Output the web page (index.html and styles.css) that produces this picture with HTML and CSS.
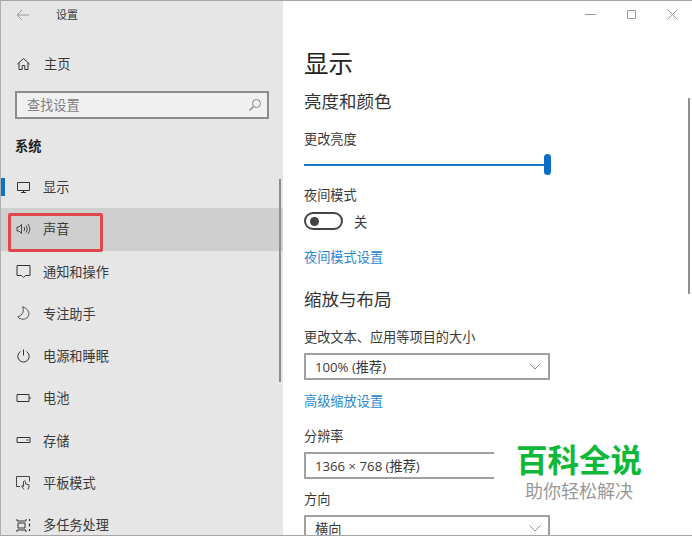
FILE: index.html
```html
<!DOCTYPE html>
<html lang="zh-CN">
<head>
<meta charset="utf-8">
<title>设置</title>
<link rel="stylesheet" href="styles.css">
</head>
<body>
<div class="window">
  <aside class="sidebar">
    <div class="titlebar">
      <svg class="back" width="14" height="12" viewBox="0 0 14 12"><path d="M6 1 1 6l5 5M1 6h12" fill="none" stroke="#9a9a9a" stroke-width="1"/></svg>
      <span class="app-title">设置</span>
    </div>
    <div class="home">
      <svg class="icon" width="14" height="14" viewBox="0 0 14 14"><path d="M1 7 7 1.500 13 7M2.500 6v6.500h3.200V8.500h2.600v4h3.200V6" fill="none" stroke="#333" stroke-width="1"/></svg>
      <span>主页</span>
    </div>
    <div class="search">
      <span class="search-text">查找设置</span>
      <svg width="14" height="14" viewBox="0 0 14 14"><circle cx="8.500" cy="5.500" r="4" fill="none" stroke="#8a8a8a"/><path d="M5.500 8.500 1.500 12.500" stroke="#8a8a8a" stroke-width="1.200"/></svg>
    </div>
    <div class="group">系统</div>
    <nav class="nav">
      <div class="item current">
        <svg class="icon" width="14" height="14" viewBox="0 0 14 14"><path d="M1 2.500h12v8H1zM7 10.500v2M4.500 12.500h5" fill="none" stroke="#333"/></svg>
        <span>显示</span>
      </div>
      <div class="item selected">
        <svg class="icon" width="15" height="14" viewBox="0 0 15 14"><path d="M1 5h2l2.500-2.500v9L3 9H1zM8 5c.8 1.200.8 2.800 0 4M10 3.500c1.500 2 1.500 5 0 7M12 2c2.300 3 2.300 7 0 10" fill="none" stroke="#333" stroke-width=".9"/></svg>
        <span>声音</span>
      </div>
      <div class="item">
        <svg class="icon" width="14" height="14" viewBox="0 0 14 14"><path d="M.5 1.500h13v10H9L7 13.500 5 11.500H.5z" fill="none" stroke="#333"/></svg>
        <span>通知和操作</span>
      </div>
      <div class="item">
        <svg class="icon" width="14" height="14" viewBox="0 0 14 14"><path d="M6 .800C8 5 6.500 9 1.200 10.800 3.800 14 9 14 11.500 10.800 14 7.200 11 2 6 .800z" fill="none" stroke="#444" stroke-width=".9"/></svg>
        <span>专注助手</span>
      </div>
      <div class="item">
        <svg class="icon" width="14" height="14" viewBox="0 0 14 14"><path d="M4 2.500a5.700 5.700 0 1 0 6 0M7 .5v6" fill="none" stroke="#333"/></svg>
        <span>电源和睡眠</span>
      </div>
      <div class="item">
        <svg class="icon" width="14" height="14" viewBox="0 0 14 14"><path d="M.5 3.500h12v7H.5z" fill="none" stroke="#333"/><path d="M13 6h1v2h-1z" fill="#333"/></svg>
        <span>电池</span>
      </div>
      <div class="item">
        <svg class="icon" width="14" height="14" viewBox="0 0 14 14"><path d="M.5 4.500h13v5H.5z" fill="none" stroke="#333"/><path d="M10 7h2" stroke="#333"/></svg>
        <span>存储</span>
      </div>
      <div class="item">
        <svg class="icon" width="15" height="15" viewBox="0 0 15 15"><path d="M4 11.500H.5v-10h13v5M8 14.500 5.500 11c.5-.6 1.200-.3 2 .5V6.500c.5-1 1.500-1 2 0V9l3.500.8v2.200l-1 2.500" fill="none" stroke="#333" stroke-width=".9"/></svg>
        <span>平板模式</span>
      </div>
      <div class="item">
        <svg class="icon" width="14" height="14" viewBox="0 0 14 14"><path d="M.5 1v2h9V1M.5 14v-2h9v2M1.500 5h7v5h-7z" fill="none" stroke="#333"/><path d="M13 1v2M13 5.500v3M13 11v2" stroke="#333" stroke-width="1.200"/></svg>
        <span>多任务处理</span>
      </div>
    </nav>
  </aside>
  <main class="content">
    <div class="controls">
      <svg width="11" height="11" viewBox="0 0 11 11"><path d="M0 5.500h11" stroke="#999"/></svg>
      <svg width="11" height="11" viewBox="0 0 11 11"><path d="M1.500 1.500h8v8h-8z" fill="none" stroke="#999"/></svg>
      <svg width="11" height="11" viewBox="0 0 11 11"><path d="m.5.500 10 10M10.500.500l-10 10" stroke="#999"/></svg>
    </div>
    <h1 class="title">显示</h1>
    <h2 class="section first">亮度和颜色</h2>
    <div class="label brightness">更改亮度</div>
    <div class="slider"><div class="track"></div><div class="thumb"></div></div>
    <div class="label night">夜间模式</div>
    <div class="toggle-row">
      <div class="toggle"><div class="knob"></div></div>
      <span>关</span>
    </div>
    <a class="link night-link">夜间模式设置</a>
    <h2 class="section scale">缩放与布局</h2>
    <div class="label size">更改文本、应用等项目的大小</div>
    <div class="select"><span>100% (推荐)</span><svg class="chev" width="12" height="7" viewBox="0 0 12 7"><path d="m.5.500 5.500 5.500 5.500-5.500" fill="none" stroke="#8a8a8a"/></svg></div>
    <a class="link adv-link">高级缩放设置</a>
    <div class="label res">分辨率</div>
    <div class="select tight"><span>1366 × 768 (推荐)</span></div>
    <div class="label dir">方向</div>
    <div class="select tight"><span>横向</span><svg class="chev" width="12" height="7" viewBox="0 0 12 7"><path d="m.5.500 5.500 5.500 5.500-5.500" fill="none" stroke="#8a8a8a"/></svg></div>
  </main>
  <div class="scroll-side"></div>
  <div class="scroll-main"></div>
  <div class="highlight"></div>
  <div class="watermark">
    <div class="wm-main">百科全说</div>
    <div class="wm-sub">助你轻松解决</div>
  </div>
</div>
</body>
</html>
```

FILE: styles.css
```css
* { box-sizing: border-box; }
html, body { margin: 0; padding: 0; height: 100%; }
body { font-family: "Open Sans", "Noto Sans CJK SC", sans-serif; font-size: 13.200px; color: #3a3a3a; background: #fff; overflow: hidden; }
.window { position: relative; display: flex; width: 692px; height: 536px; overflow: hidden; border-top: 1px solid #a5a5a5; border-left: 1px solid #b0b0b0; border-bottom: 1px solid #a5a5a5; }
.sidebar { width: 282px; flex: none; background: #e6e6e6; display: flex; flex-direction: column; }
.sidebar > *, .content > * { flex: none; }
.titlebar { display: flex; align-items: center; height: 27px; padding-left: 15px; }
.back { flex: none; }
.app-title { margin-left: 26px; font-size: 11px; line-height: 27px; }
.home { display: flex; align-items: center; height: 20px; margin-top: 26px; padding-left: 15px; line-height: 20px; }
.icon { flex: none; width: 15px; }
.home span { margin-left: 13px; }
.search { display: flex; align-items: center; justify-content: space-between; width: 254px; height: 28px; margin: 17px 0 0 14px; padding: 0 5px 0 10px; background: #f0f0f0; border: 2px solid #8c8c8c; }
.search-text { color: #808080; line-height: 20px; }
.group { margin: 17px 0 0 14px; font-weight: 700; line-height: 20px; color: #222; }
.nav { display: flex; flex-direction: column; margin-top: 10px; }
.item { display: flex; align-items: center; flex: none; height: 42.250px; padding: 0 0 1px 15px; gap: 12px; }
.current { position: relative; }
.current::before { content: ""; position: absolute; left: 0; top: 12px; width: 4px; height: 18px; background: #0a74c9; }
.selected { background: #cfcfcf; }
.content { flex: 1; min-width: 0; padding-left: 21px; display: flex; flex-direction: column; align-items: flex-start; }
.controls { display: flex; align-self: flex-end; gap: 30px; height: 18px; margin: 8px 14px 0 0; }
.title { margin: 19px 0 0; font-size: 24.500px; font-weight: 400; line-height: 36px; color: #222; }
.section { margin: 0; font-size: 17.500px; font-weight: 400; line-height: 26px; color: #333; }
.first { margin-top: 6px; }
.label { line-height: 20px; }
.brightness { margin-top: 15px; }
.slider { position: relative; width: 247px; height: 22px; margin-top: 5px; }
.track { position: absolute; left: 0; right: 3px; top: 10px; height: 2px; background: #1a78c8; }
.thumb { position: absolute; right: 0; top: 0; width: 7px; height: 21px; border-radius: 4px; background: #0a6fc4; }
.night { margin-top: 9px; }
.toggle-row { display: flex; align-items: center; gap: 11px; height: 20px; margin-top: 6px; }
.toggle { display: flex; align-items: center; width: 39px; height: 18px; padding-left: 4px; border: 2px solid #444; border-radius: 9px; }
.knob { width: 9px; height: 9px; border-radius: 50%; background: #444; }
.link { color: #2b88d0; line-height: 20px; }
.night-link { margin-top: 16px; }
.scale { margin-top: 19px; }
.size { margin-top: 15px; }
.select { display: flex; align-items: center; justify-content: space-between; width: 246px; height: 27px; margin-top: 6px; padding: 0 7px 1px 9px; border: 2px solid #a0a0a0; }
.tight { margin-top: 6px; }
.adv-link { margin-top: 11px; }
.res { margin-top: 15px; }
.dir { margin-top: 10px; }
.scroll-side { position: absolute; left: 278px; top: 178px; width: 2px; height: 203px; background: #8e8e8e; }
.scroll-main { position: absolute; left: 687px; top: 97px; width: 2px; height: 196px; background: #8e8e8e; }
.highlight { position: absolute; left: 7px; top: 212px; width: 95px; height: 39px; border: 3px solid #e0474c; border-radius: 2px; }
.watermark { position: absolute; left: 493px; top: 436px; width: 170px; height: 74px; background: #fff; text-align: center; }
.wm-main { margin-top: 3px; font-size: 31.500px; font-weight: 700; line-height: 40px; color: #10b83a; }
.wm-sub { margin-top: -2px; font-size: 18px; line-height: 26px; color: #999; }
```
